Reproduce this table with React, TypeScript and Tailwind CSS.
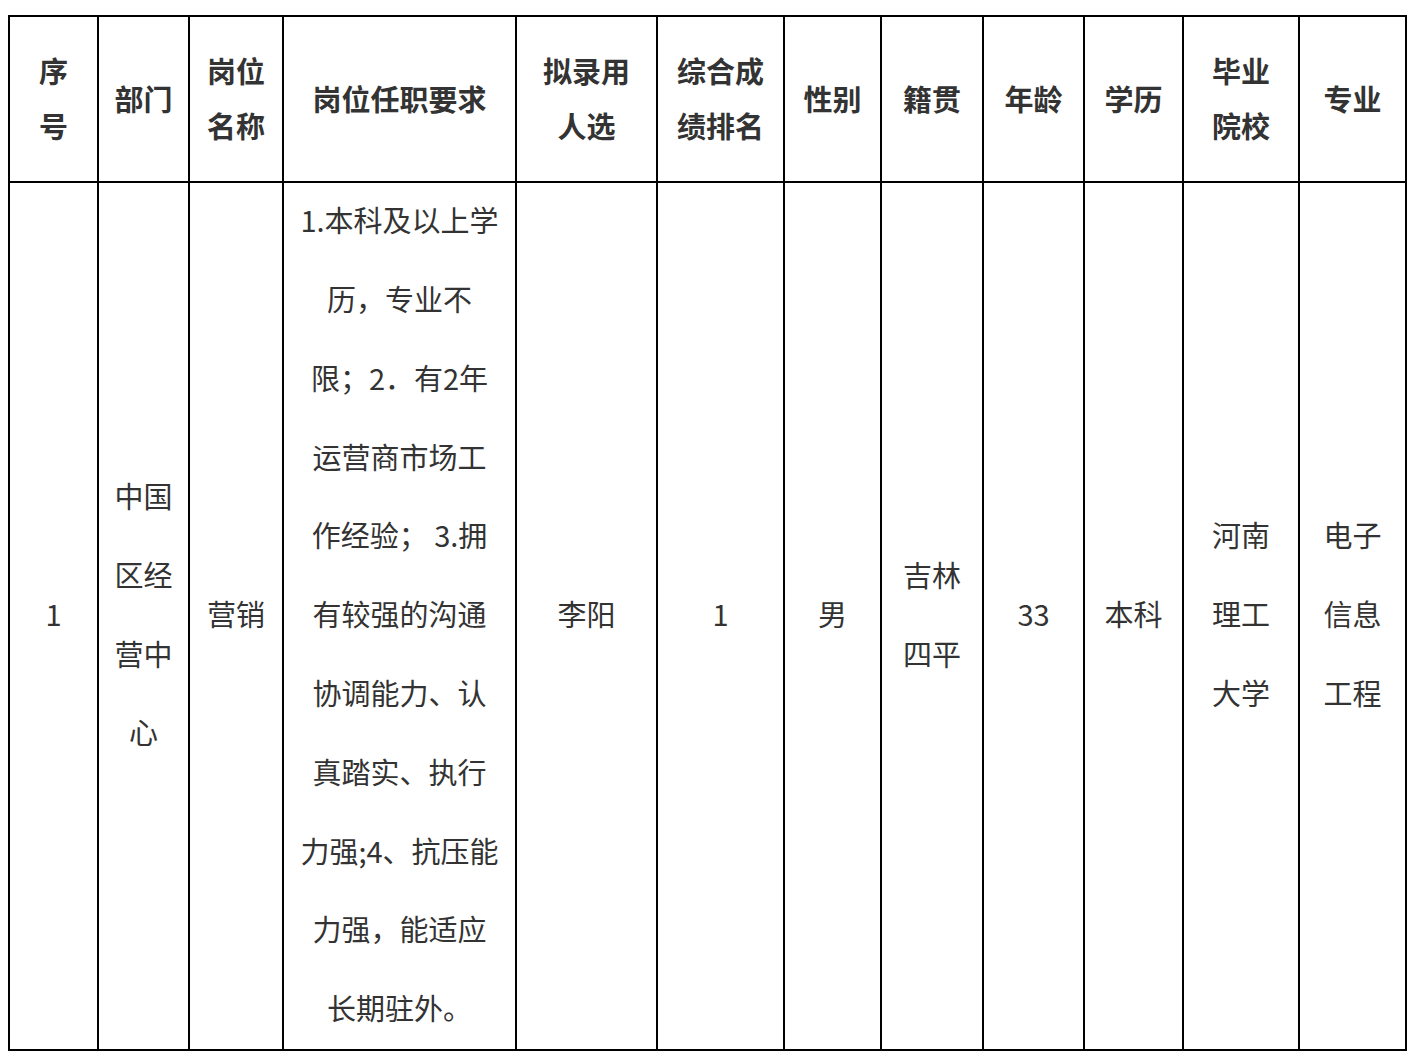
const FONT = { fontFamily: '"Noto Sans CJK SC", "Noto Sans", sans-serif' };

const headers: string[][] = [
  ["序", "号"],
  ["部门"],
  ["岗位", "名称"],
  ["岗位任职要求"],
  ["拟录用", "人选"],
  ["综合成", "绩排名"],
  ["性别"],
  ["籍贯"],
  ["年龄"],
  ["学历"],
  ["毕业", "院校"],
  ["专业"],
];

const row: string[][] = [
  ["1"],
  ["中国", "区经", "营中", "心"],
  ["营销"],
  [
    "1.本科及以上学",
    "历，专业不",
    "限；2．有2年",
    "运营商市场工",
    "作经验； 3.拥",
    "有较强的沟通",
    "协调能力、认",
    "真踏实、执行",
    "力强;4、抗压能",
    "力强，能适应",
    "长期驻外。",
  ],
  ["李阳"],
  ["1"],
  ["男"],
  ["吉林", "四平"],
  ["33"],
  ["本科"],
  ["河南", "理工", "大学"],
  ["电子", "信息", "工程"],
];

export default function App() {
  return (
    <div className="min-h-screen bg-white pt-[15px] pl-[8px]" style={FONT}>
      <div className="grid w-[1399px] grid-cols-[89px_91px_94px_233px_141px_127px_97px_102px_101px_99px_116px_107px] grid-rows-[166px_868px] border-l-2 border-t-2 border-black text-[29px] text-[#333]">
        {headers.map((lines, i) => (
          <div
            key={"h" + i}
            className="flex flex-col items-center justify-center border-b-2 border-r-2 border-black pb-[2px] font-bold leading-[55px]"
          >
            {lines.map((l) => (
              <div key={l} className="whitespace-nowrap">
                {l}
              </div>
            ))}
          </div>
        ))}
        {row.map((lines, i) => (
          <div
            key={"r" + i}
            className="flex flex-col items-center justify-center border-b-2 border-r-2 border-black pb-[5px] leading-[78.8px]"
          >
            {lines.map((l) => (
              <div key={l} className="whitespace-pre">
                {l}
              </div>
            ))}
          </div>
        ))}
      </div>
    </div>
  );
}
